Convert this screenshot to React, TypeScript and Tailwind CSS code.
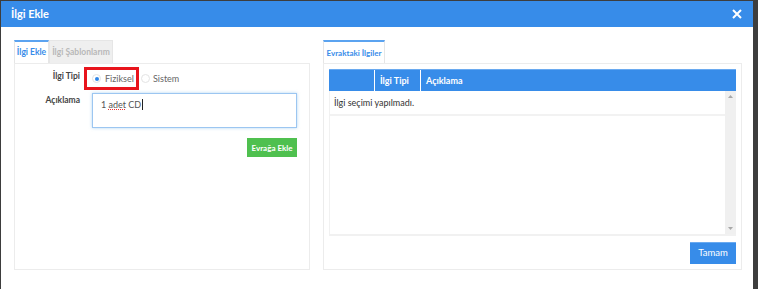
import React from "react";

const font = { fontFamily: "Lato, 'Open Sans', sans-serif" };

function Radio({ checked }: { checked?: boolean }) {
  return (
    <span className="flex h-[9px] w-[9px] items-center justify-center rounded-full border border-[#e3e3e3] bg-white">
      {checked ? <span className="h-[4px] w-[4px] rounded-full bg-[#2f86e8]" /> : null}
    </span>
  );
}

export default function App() {
  return (
    <div
      className="h-[289px] w-[758px] overflow-hidden bg-[#3d3d3d] pl-px pr-[5px] pt-px"
      style={font}
    >
      <div className="flex h-full flex-col bg-white">
        {/* header */}
        <div className="flex h-[26px] items-center justify-between bg-[#378ce9] pl-[10px] pr-[11px]">
          <span className="text-[11px] font-bold text-white">İlgi Ekle</span>
          <svg width="10" height="10" viewBox="0 0 10 10">
            <path d="M1 1 L9 9 M9 1 L1 9" stroke="#fff" strokeWidth="2" />
          </svg>
        </div>

        <div className="flex gap-[13px] pl-[13px] pt-[13px]">
          {/* left */}
          <div className="flex w-[296px] flex-col">
            <div className="flex h-[23px]">
              <div className="flex w-[35px] items-center justify-center border-x border-t-2 border-x-[#e6e6e6] border-t-[#5ba3f0] text-[8.5px] font-bold text-[#378ce9]">
                İlgi Ekle
              </div>
              <div className="flex w-[64px] items-center justify-center border border-b-0 border-[#e6e6e6] bg-[#efefef] text-[8.5px] font-bold text-[#b8b8b8]">
                İlgi Şablonlarım
              </div>
            </div>
            <div className="flex h-[207px] flex-col border border-[#ececec] pt-[3px] pr-[12px]">
              <div className="flex items-start">
                <div className="mt-[3px] w-[65px] text-right text-[8.5px] font-bold text-[#444]">
                  İlgi Tipi
                </div>
                <div className="ml-[4px] flex h-[23px] w-[55px] items-center border-[3px] border-[#e8141c] pl-[5px]">
                  <Radio checked />
                  <span className="ml-[4px] text-[9px] text-[#666]">Fiziksel</span>
                </div>
                <div className="flex h-[23px] items-center pl-[2px]">
                  <Radio />
                  <span className="ml-[3px] text-[9px] text-[#666]">Sistem</span>
                </div>
              </div>
              <div className="mt-[3px] flex items-start">
                <div className="mt-px w-[65px] text-right text-[8.5px] font-bold text-[#444]">
                  Açıklama
                </div>
                <div className="ml-[12px] flex h-[35px] flex-1 items-start border border-[#9cc6f1] pl-[8px] pt-[4px] text-[9px] text-[#555] shadow-[0_0_3px_rgba(102,175,233,0.5)]">
                  <span>
                    1 <span className="underline decoration-[#e33] decoration-dotted">adet</span> CD
                  </span>
                  <span className="ml-px mt-[1px] h-[11px] w-px bg-[#222]" />
                </div>
              </div>
              <div className="mt-[10px] flex justify-end">
                <button className="flex h-[19px] w-[50px] items-center justify-center bg-[#4fc04f] text-[8px] font-bold text-white">
                  Evrağa Ekle
                </button>
              </div>
            </div>
          </div>

          {/* right */}
          <div className="flex w-[419px] flex-col">
            <div className="flex h-[23px]">
              <div className="flex w-[62px] items-center justify-center border-x border-t-2 border-x-[#e6e6e6] border-t-[#5ba3f0] text-[8px] font-bold text-[#378ce9]">
                Evraktaki İlgiler
              </div>
            </div>
            <div className="flex h-[207px] flex-col border border-[#ececec] p-[5px]">
              <div className="flex h-[22px] border-t border-[#6aaaf0] bg-[#378ce9] text-[9px] font-bold text-white">
                <div className="w-[46px] border-r border-white" />
                <div className="flex w-[46px] items-center border-r border-white pl-[5px]">İlgi Tipi</div>
                <div className="flex flex-1 items-center pl-[5px]">Açıklama</div>
              </div>
              <div className="flex h-[145px] border-b-2 border-l border-[#f1f1f1]">
                <div className="flex-1">
                  <div className="flex h-[25px] items-center border-b-2 border-[#f2f2f2] pl-[4px] text-[9px] text-[#333]">
                    İlgi seçimi yapılmadı.
                  </div>
                </div>
                <div className="flex w-[11px] flex-col items-center justify-between bg-[#f0f0f0] py-[4px]">
                  <svg width="5" height="3" viewBox="0 0 5 3">
                    <path d="M0 3 L2.5 0 L5 3 Z" fill="#a8a8a8" />
                  </svg>
                  <svg width="5" height="3" viewBox="0 0 5 3">
                    <path d="M0 0 L5 0 L2.5 3 Z" fill="#a8a8a8" />
                  </svg>
                </div>
              </div>
              <div className="mt-[6px] flex justify-end">
                <button className="flex h-[22px] w-[46px] items-center justify-center border-t border-[#6aaaf0] bg-[#378ce9] text-[9.5px] text-white">
                  Tamam
                </button>
              </div>
            </div>
          </div>
        </div>
      </div>
    </div>
  );
}
